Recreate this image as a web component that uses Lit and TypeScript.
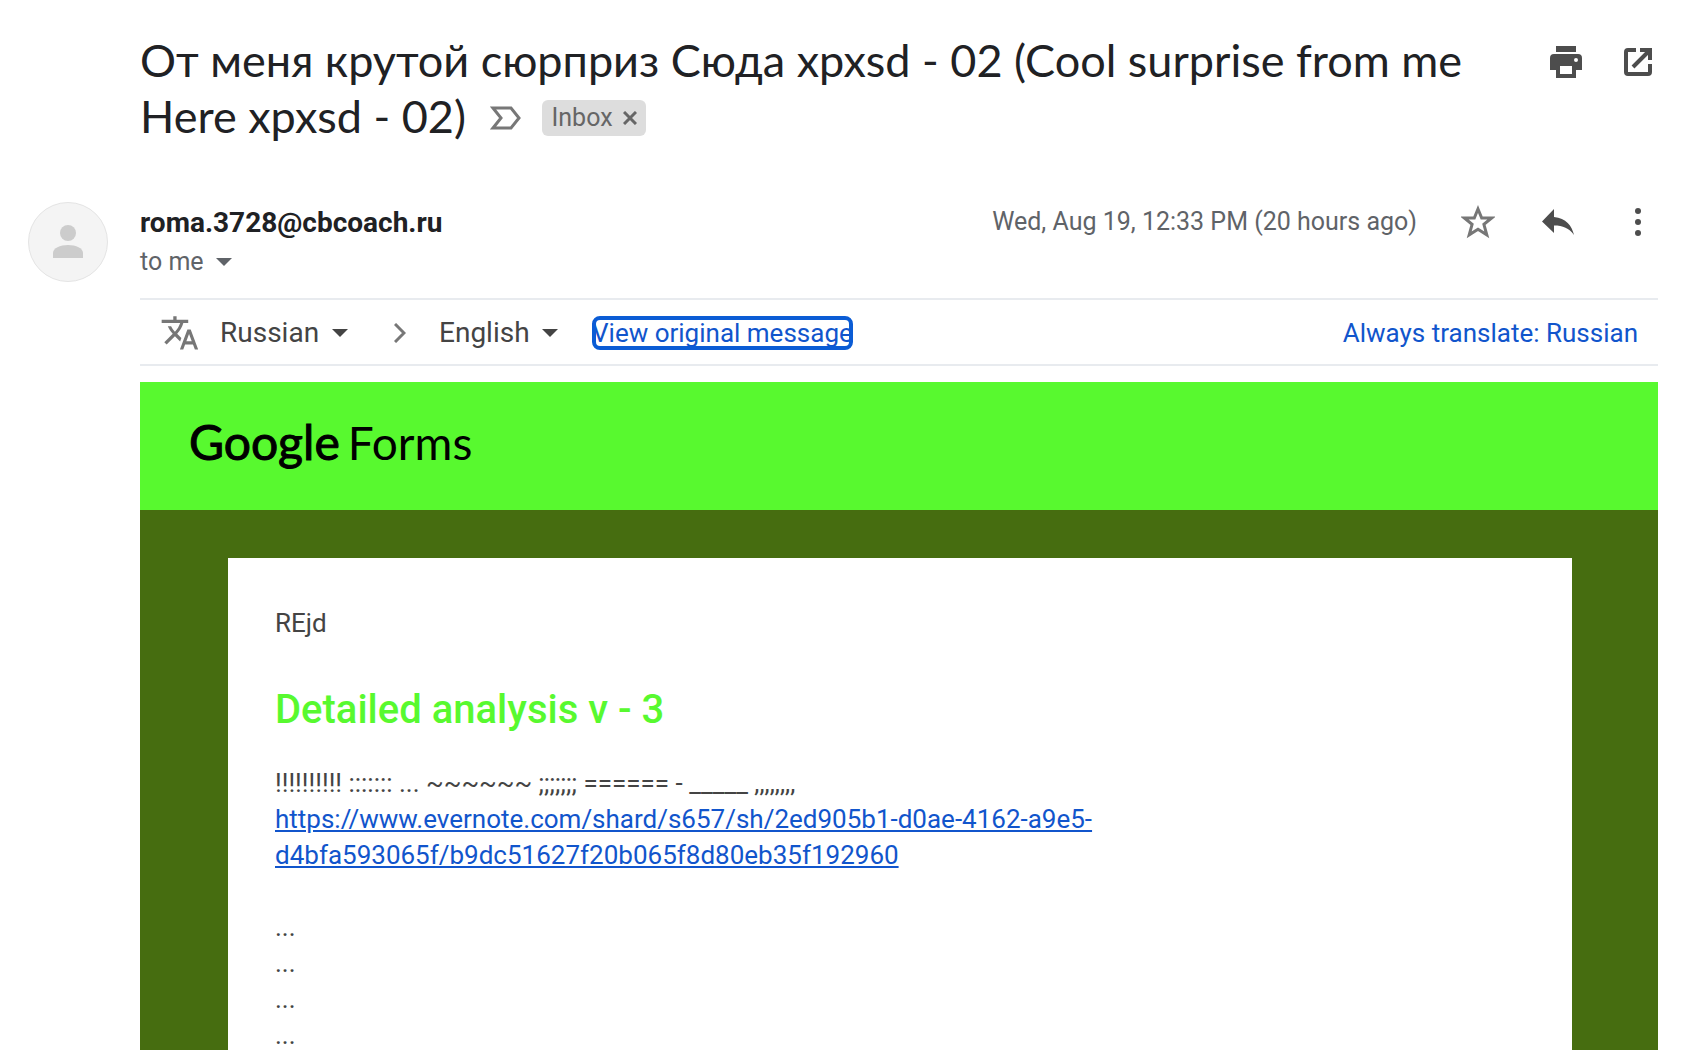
import { LitElement, html, css, svg } from "lit";
import { customElement, state } from "lit/decorators.js";

const evernoteHref =
  "https://www.evernote.com/shard/s657/sh/2ed905b1-d0ae-4162-a9e5-d4bfa593065f/b9dc51627f20b065f8d80eb35f192960";

const icon = (w: number, h: number, body: unknown) =>
  html`<svg width=${w} height=${h} viewBox="0 0 ${w} ${h}" aria-hidden="true">${body}</svg>`;

const printIcon = icon(32, 32, svg`
  <path fill="#4d4d4d" fill-rule="evenodd" d="M6 0h20v6H6zM4 8h24a4 4 0 0 1 4 4v12h-6v8H6v-8H0V12a4 4 0 0 1 4-4zM10 20v8h12v-8zM26 12a2 2 0 1 0 0 4a2 2 0 0 0 0-4z"/>`);
const openIcon = icon(28, 28, svg`
  <g fill="none" stroke="#4d4d4d" stroke-width="4">
    <path d="M12 2H4a2 2 0 0 0-2 2v20a2 2 0 0 0 2 2h20a2 2 0 0 0 2-2v-8"/>
    <path d="M16 2h10v10M25 3L9 19"/>
  </g>`);
const labelIcon = icon(32, 24, svg`
  <path fill="none" stroke="#777" stroke-width="3" d="M3 2H21L29 12L21 22H3L11 12z"/>`);
const closeIcon = icon(14, 14, svg`
  <path fill="none" stroke="#666" stroke-width="3" d="M1 1L13 13M13 1L1 13"/>`);
const avatarIcon = icon(32, 34, svg`
  <circle cx="16" cy="8" r="8" fill="#ccc"/>
  <path fill="#ccc" d="M1 33V28C1 23 8 20 16 20S31 23 31 28V33z"/>`);
const starIcon = icon(34, 34, svg`
  <path fill="none" stroke="#777" stroke-width="3" d="M17 4L20.7 13H30.6L22.9 19.3L25.8 29.8L17 24.2L8.2 29.8L11.1 19.3L3.4 13H13.3z"/>`);
const replyIcon = icon(32, 26, svg`
  <path fill="#4d4d4d" d="M12 8V0L0 12.500L12 24V16.500C21 16.500 27 19 32 26C30 17 24 9 12 8z"/>`);
const moreIcon = icon(6, 28, svg`
  <g fill="#4d4d4d"><circle cx="3" cy="3" r="3"/><circle cx="3" cy="14" r="3"/><circle cx="3" cy="25" r="3"/></g>`);
const translateIcon = icon(38, 36, svg`
  <path fill="#777" transform="translate(0 -2) scale(1.66)" d="M12.870 15.070l-2.540-2.510.030-.030c1.740-1.940 2.980-4.170 3.710-6.530H17V4h-7V2H8v2H1v1.990h11.170C11.500 7.920 10.440 9.750 9 11.350 8.070 10.320 7.300 9.190 6.690 8h-2c.730 1.630 1.730 3.170 2.980 4.560l-5.090 5.020L4 19l5-5 3.110 3.110.760-2.040zM18.500 10h-2L12 22h2l1.120-3h4.750L21 22h2l-4.500-12zm-2.620 7l1.620-4.330L19.120 17h-3.240z"/>`);
const chevronIcon = icon(12, 20, svg`
  <path fill="none" stroke="#777" stroke-width="3" d="M1 1L10 10L1 19"/>`);
const caretIcon = icon(16, 8, svg`<path fill="currentColor" d="M0 0H16L8 8z"/>`);

@customElement("app-root")
export class AppRoot extends LitElement {
  @state() private starred = false;

  static styles = css`
    :host {
      display: block;
      height: 100vh;
      overflow: hidden;
      background: #fff;
      color: #202124;
      font-family: Roboto, "Liberation Sans", sans-serif;
      font-size: 26px;
      line-height: 36px;
    }
    * { box-sizing: border-box; }
    svg { display: block; flex: none; }
    button, select {
      margin: 0;
      padding: 0;
      border: 0;
      background: none;
      color: inherit;
      font: inherit;
      cursor: pointer;
    }
    h1, h2, p { margin: 0; font-weight: 400; }
    .page { display: flex; flex-direction: column; height: 100%; padding: 32px 26px 0 28px; }
    .head, .meta, .bar, .banner { flex: none; }
    .head { display: flex; justify-content: space-between; align-items: flex-start; padding-left: 112px; }
    .subject { flex: 1; max-width: 1360px; font-family: Lato, "Noto Sans", sans-serif; font-size: 45px; line-height: 56px; }
    .tags { display: inline-flex; align-items: center; gap: 20px; height: 56px; margin-left: 13px; padding-top: 4px; vertical-align: top; font-family: Roboto, sans-serif; }
    .chip { display: flex; align-items: center; gap: 10px; height: 36px; padding: 0 9px; border-radius: 6px; background: #ddd; color: #666; font-size: 25px; line-height: 36px; }
    .tools { display: flex; align-items: center; gap: 42px; padding: 14px 6px 0 0; }
    .meta { display: flex; align-items: flex-start; gap: 32px; margin-top: 54px; }
    .avatar { display: flex; align-items: center; justify-content: center; width: 80px; height: 80px; margin-top: 4px; border: 1px solid #e4e4e4; border-radius: 50%; background: #f4f4f4; }
    .who { flex: 1; display: flex; flex-direction: column; gap: 3px; padding-top: 7px; }
    .sender { font-weight: 700; font-size: 28px; }
    .to { display: flex; align-items: center; gap: 12px; color: #5f6368; font-size: 25px; }
    .when { display: flex; align-items: center; gap: 44px; padding: 6px 17px 0 0; color: #5f6368; font-size: 25px; }
    .actions { display: flex; align-items: center; gap: 47px; }
    .actions button:last-child { margin-left: 14px; }
    .body { flex: 1; display: flex; flex-direction: column; min-height: 0; margin-left: 112px; }
    .bar { display: flex; align-items: center; height: 68px; margin-top: 16px; padding: 2px 20px 0; border: solid #e8ebef; border-width: 2px 0; color: #444; }
    .lang { display: flex; align-items: center; gap: 12px; font-size: 28px; }
    .lang select { appearance: none; outline: none; }
    .pick { margin-left: 22px; }
    .arrow { margin: 0 33px 0 46px; }
    .link { color: #15c; }
    .bar .link { text-decoration: none; }
    .original { margin-left: 34px; border-radius: 8px; line-height: 34px; outline: 4px solid #0b5cd5; outline-offset: -4px; }
    .always { margin-left: auto; }
    .banner { display: flex; align-items: baseline; gap: 8px; height: 128px; margin-top: 16px; padding: 30px 49px; background: #58f92f; color: #000; font-family: Lato, sans-serif; font-size: 46px; line-height: 60px; }
    .banner strong { font-weight: 400; font-size: 48px; -webkit-text-stroke: 1px #000; }
    .mail { flex: 1; padding: 48px 86px 0 88px; background: #466d10; }
    .card { min-height: 100%; padding: 47px 47px 0; background: #fff; color: #444; }
    .card h2 { margin: 41px 0 27px; color: #58f92f; font-weight: 500; font-size: 40px; line-height: 56px; }
    .url { max-width: 840px; }
    .dots { margin-top: 36px; }
  `;

  render() {
    return html`
      <main class="page">
        <header class="head">
          <h1 class="subject">От меня крутой сюрприз Сюда xpxsd - 02 (Cool surprise from me Here xpxsd - 02)
            <span class="tags">${labelIcon}<span class="chip">Inbox<button aria-label="Remove label Inbox">${closeIcon}</button></span></span>
          </h1>
          <div class="tools">
            <button aria-label="Print">${printIcon}</button>
            <button aria-label="Open in new window">${openIcon}</button>
          </div>
        </header>
        <section class="meta">
          <div class="avatar">${avatarIcon}</div>
          <div class="who">
            <span class="sender">roma.3728@cbcoach.ru</span>
            <button class="to" aria-label="Show details">to me ${caretIcon}</button>
          </div>
          <div class="when">
            <time>Wed, Aug 19, 12:33 PM (20 hours ago)</time>
            <div class="actions">
              <button aria-label="Star" aria-pressed=${this.starred} @click=${() => (this.starred = !this.starred)}>${starIcon}</button>
              <button aria-label="Reply">${replyIcon}</button>
              <button aria-label="More">${moreIcon}</button>
            </div>
          </div>
        </section>
        <section class="body">
          <nav class="bar">
            ${translateIcon}
            <label class="lang pick"><select aria-label="From language"><option>Russian</option></select>${caretIcon}</label>
            <span class="arrow">${chevronIcon}</span>
            <label class="lang"><select aria-label="To language"><option>English</option></select>${caretIcon}</label>
            <a class="link original" href="#original">View original message</a>
            <a class="link always" href="#always">Always translate: Russian</a>
          </nav>
          <div class="banner"><strong>Google</strong><span>Forms</span></div>
          <div class="mail">
            <article class="card">
              <p>REjd</p>
              <h2>Detailed analysis v - 3</h2>
              <p>!!!!!!!!!! ::::::: ... ~~~~~~ ;;;;;;; ====== - _____ ,,,,,,,,</p>
              <p class="url"><a class="link" href=${evernoteHref}>${evernoteHref}</a></p>
              <div class="dots">${[0, 1, 2, 3].map(() => html`<p>...</p>`)}</div>
            </article>
          </div>
        </section>
      </main>
    `;
  }
}
